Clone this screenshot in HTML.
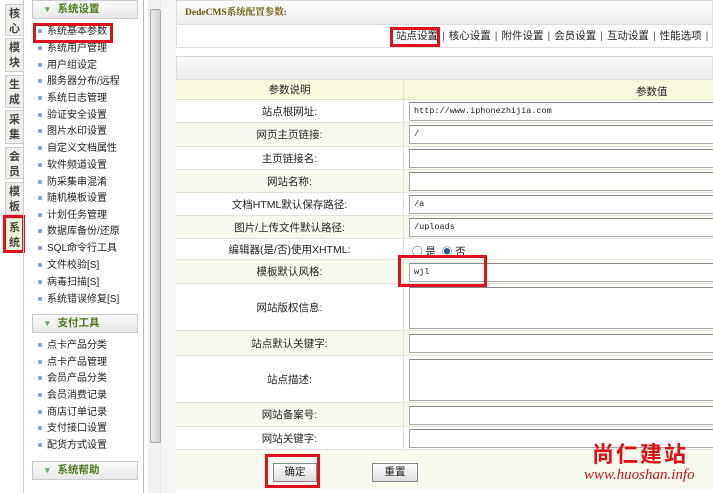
<!DOCTYPE html>
<html><head><meta charset="utf-8"><style>
*{margin:0;padding:0;box-sizing:border-box}
body{width:713px;height:493px;overflow:hidden;background:#fff;font-family:"Liberation Sans","Noto Sans CJK SC",sans-serif;font-size:10.5px;color:#222;position:relative}
.a{position:absolute}
.tab{position:absolute;left:5px;width:19px;background:#f0f0ea;border:1px solid #ccc;font-size:11px;font-weight:bold;color:#444;text-align:center;line-height:15px;padding-top:2px}
.mh{position:absolute;left:32px;width:106px;height:19px;border:1px solid #ccc;background:linear-gradient(#fafafa,#e8e8e8);color:#4a7a1a;font-weight:bold;font-size:10.5px;line-height:17px;padding-left:12px}
.mh:before{content:"▾";color:#6a6;font-size:9px;margin-right:8px}
.mi{position:absolute;left:38px;font-size:10px;line-height:14px;color:#222}
.mi:before{content:"";display:inline-block;width:4px;height:4px;background:#8aa6cc;border-radius:1px;margin-right:5px;vertical-align:middle}
.row{position:absolute;left:176px;width:537px;border-bottom:1px solid #e2e2d8}
.lb{position:absolute;left:0;width:228px;top:0;bottom:0;display:flex;align-items:center;justify-content:center;border-right:1px solid #e2e2d8;font-size:10.5px}
.in{position:absolute;left:233px;width:320px;height:19px;border:1px solid #aaa;border-top-color:#888;background:#fff;font-family:"Liberation Mono",monospace;font-size:8.5px;line-height:17px;padding-left:4px}
.red{position:absolute;border:3px solid #e01020}
.sp{margin:0 4px;color:#555}
</style></head><body>
<div class="a" style="left:0;top:0;width:28px;height:493px;background:#fff"></div>
<div class="tab" style="top:4px;height:32px">核<br>心</div>
<div class="tab" style="top:38px;height:34px">模<br>块</div>
<div class="tab" style="top:75px;height:33px">生<br>成</div>
<div class="tab" style="top:110px;height:34px">采<br>集</div>
<div class="tab" style="top:147px;height:32px">会<br>员</div>
<div class="tab" style="top:182px;height:33px">模<br>板</div>
<div class="tab" style="top:218px;height:33px;background:#eef5d8">系<br>统</div>
<div class="red" style="left:3px;top:215px;width:22px;height:38px"></div>
<div class="a" style="left:23px;top:0;width:121px;height:493px;border-left:1px solid #ccc;border-right:1px solid #bbb"></div>
<div class="mh" style="top:0">系统设置</div>
<div class="mi" style="top:25px">系统基本参数</div>
<div class="mi" style="top:42px">系统用户管理</div>
<div class="mi" style="top:59px">用户组设定</div>
<div class="mi" style="top:75px">服务器分布/远程</div>
<div class="mi" style="top:92px">系统日志管理</div>
<div class="mi" style="top:109px">验证安全设置</div>
<div class="mi" style="top:125px">图片水印设置</div>
<div class="mi" style="top:142px">自定义文档属性</div>
<div class="mi" style="top:159px">软件频道设置</div>
<div class="mi" style="top:176px">防采集串混淆</div>
<div class="mi" style="top:192px">随机模板设置</div>
<div class="mi" style="top:209px">计划任务管理</div>
<div class="mi" style="top:225px">数据库备份/还原</div>
<div class="mi" style="top:242px">SQL命令行工具</div>
<div class="mi" style="top:259px">文件校验[S]</div>
<div class="mi" style="top:276px">病毒扫描[S]</div>
<div class="mi" style="top:293px">系统错误修复[S]</div>
<div class="mh" style="top:314px">支付工具</div>
<div class="mi" style="top:339px">点卡产品分类</div>
<div class="mi" style="top:356px">点卡产品管理</div>
<div class="mi" style="top:372px">会员产品分类</div>
<div class="mi" style="top:389px">会员消费记录</div>
<div class="mi" style="top:406px">商店订单记录</div>
<div class="mi" style="top:422px">支付接口设置</div>
<div class="mi" style="top:439px">配货方式设置</div>
<div class="mh" style="top:461px">系统帮助</div>
<div class="red" style="left:33px;top:23px;width:80px;height:20px"></div>
<div class="a" style="left:148px;top:0;width:14px;height:493px;background:#f0f0f0"></div>
<div class="a" style="left:150px;top:9px;width:11px;height:434px;background:linear-gradient(90deg,#e8e8e8,#d0d0d0);border:1px solid #aaa;border-radius:2px"></div>
<div class="a" style="left:162px;top:0;width:14px;height:493px;background:#f6f6f6"></div>
<div class="a" style="left:176px;top:0;width:537px;height:25px;background:linear-gradient(#fdfdfd,#eeeeee);border:1px solid #ddd;font-family:'Liberation Serif','Noto Serif CJK SC',serif;font-weight:bold;font-size:9.5px;color:#6a5a00;line-height:24px;padding-left:8px">DedeCMS系统配置参数:</div>
<div class="a" style="left:176px;top:25px;width:537px;height:23px;border:1px solid #ddd;border-top:none;background:#fff;font-size:10.5px;line-height:22px;white-space:nowrap;overflow:hidden;padding-left:219px">站点设置<span class="sp">|</span>核心设置<span class="sp">|</span>附件设置<span class="sp">|</span>会员设置<span class="sp">|</span>互动设置<span class="sp">|</span>性能选项<span class="sp">|</span>其它</div>
<div class="red" style="left:390px;top:27px;width:50px;height:20px"></div>
<div class="a" style="left:176px;top:56px;width:537px;height:24px;background:linear-gradient(#fafafa,#ececec);border:1px solid #ddd"></div>
<div class="row" style="top:80px;height:20px;background:#fbf9dc"><div class="lb">参数说明</div><div class="a" style="left:460px;top:4px">参数值</div></div>
<div class="row" style="top:100px;height:23px"><div class="lb">站点根网址:</div><div class="in" style="top:2px">http://www.iphonezhijia.com</div></div>
<div class="row" style="top:123px;height:24px;background:#f8faef"><div class="lb">网页主页链接:</div><div class="in" style="top:2px">/</div></div>
<div class="row" style="top:147px;height:23px"><div class="lb">主页链接名:</div><div class="in" style="top:2px"></div></div>
<div class="row" style="top:170px;height:23px;background:#f8faef"><div class="lb">网站名称:</div><div class="in" style="top:2px"></div></div>
<div class="row" style="top:193px;height:23px"><div class="lb">文档HTML默认保存路径:</div><div class="in" style="top:2px">/a</div></div>
<div class="row" style="top:216px;height:23px;background:#f8faef"><div class="lb">图片/上传文件默认路径:</div><div class="in" style="top:2px">/uploads</div></div>
<div class="row" style="top:239px;height:21px"><div class="lb">编辑器(是/否)使用XHTML:</div><div class="a" style="left:236px;top:5px">◯ 是 &nbsp;<span style="color:#1a5aa0">◉</span> 否</div></div>
<div class="row" style="top:260px;height:24px;background:#f8faef"><div class="lb">模板默认风格:</div><div class="in" style="top:3px">wjl</div></div>
<div class="row" style="top:284px;height:47px"><div class="lb">网站版权信息:</div><div class="in" style="top:3px;height:42px"></div></div>
<div class="row" style="top:331px;height:25px;background:#f8faef"><div class="lb">站点默认关键字:</div><div class="in" style="top:3px"></div></div>
<div class="row" style="top:356px;height:47px"><div class="lb">站点描述:</div><div class="in" style="top:3px;height:42px"></div></div>
<div class="row" style="top:403px;height:24px;background:#f8faef"><div class="lb">网站备案号:</div><div class="in" style="top:3px"></div></div>
<div class="row" style="top:427px;height:23px"><div class="lb">网站关键字:</div><div class="in" style="top:2px"></div></div>
<div class="row" style="top:450px;height:39px;background:#f8faef;border-bottom:none"></div>
<div class="a" style="left:273px;top:463px;width:44px;height:19px;border:1px solid #888;background:linear-gradient(#fff,#ddd);text-align:center;line-height:17px">确定</div>
<div class="a" style="left:372px;top:463px;width:46px;height:19px;border:1px solid #888;background:linear-gradient(#fff,#ddd);text-align:center;line-height:17px">重置</div>
<div class="red" style="left:265px;top:454px;width:55px;height:34px"></div>
<div class="red" style="left:398px;top:255px;width:89px;height:32px"></div>
<div class="a" style="left:592px;top:440px;font-size:22px;font-weight:bold;color:#e01010;letter-spacing:2px;font-family:'Noto Sans CJK SC',sans-serif;line-height:26px">尚仁建站</div>
<div class="a" style="left:584px;top:467px;font-family:'Liberation Serif',serif;font-style:italic;font-size:15px;color:#c01818">www.huoshan.info</div>
</body></html>
